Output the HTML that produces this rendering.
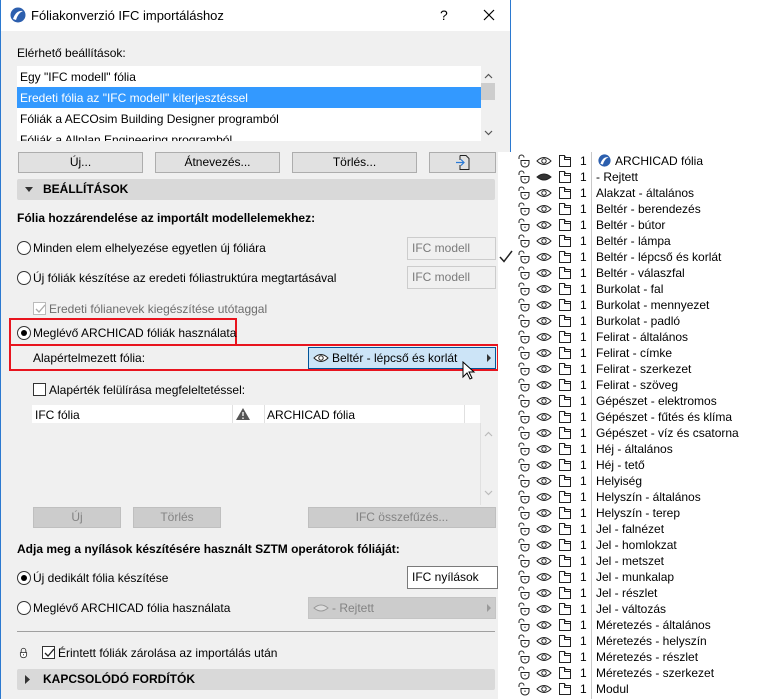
<!DOCTYPE html>
<html><head><meta charset="utf-8">
<style>
*{box-sizing:border-box;margin:0;padding:0}
body{width:767px;height:699px;background:#fff;position:relative;overflow:hidden;font-family:"Liberation Sans",sans-serif;font-size:12px;color:#000}
.a{position:absolute;white-space:nowrap}
#dlg{position:absolute;left:0;top:0;width:511px;height:699px;background:#f0f0f0;border-left:1px solid #2b79d0;border-right:1px solid #2b79d0}
#title{position:absolute;left:0;top:0;width:509px;height:31px;background:#fff}
.btn{position:absolute;height:21px;background:#e1e1e1;border:1px solid #adadad;text-align:center;line-height:19px}
.btn.d{background:#cccccc;border-color:#bfbfbf;color:#838383}
.sec{position:absolute;left:16px;width:478px;height:21px;background:#d9d9d9;font-weight:bold;line-height:21px;padding-left:26px;border-radius:2px}
.rad{position:absolute;width:14px;height:14px;border:1px solid #333;border-radius:50%;background:#fff}
.rad.on::after{content:"";position:absolute;left:3px;top:3px;width:6px;height:6px;border-radius:50%;background:#000}
.tb{position:absolute;height:23px;border:1px solid #ccc;background:#f0f0f0;color:#7a7a7a;line-height:21px;padding-left:4px}
.cb{position:absolute;width:13px;height:13px;border:1px solid #333;background:#fff}
.red{position:absolute;border:2px solid #e8141e}
#pop{position:absolute;left:498px;top:152px;width:269px;height:547px;background:#fff}
#rows{position:absolute;left:11px;top:0;width:258px;height:547px}
.row{position:absolute;left:0;height:16px;width:258px}
.row svg{position:absolute;top:1px}
.row .n{position:absolute;left:71px;top:1px}
.row .t{position:absolute;left:87px;top:1px}
.sep{position:absolute;left:82px;top:0;width:1px;height:547px;background:#c8c8c8}
</style></head><body>
<svg width="0" height="0" style="position:absolute">
<defs>
<symbol id="lk" viewBox="0 0 14 14"><path d="M2 5V3.5a2.5 2.5 0 0 1 5 0" fill="none" stroke="#222" stroke-width="1"/><path d="M4 6.5h8v3a4 3.5 0 0 1-8 0z" fill="#fff" stroke="#222" stroke-width="1"/><path d="M8 8.5v1.5" stroke="#222"/></symbol>
<symbol id="ey" viewBox="0 0 16 14"><path d="M1 7Q8 0 15 7Q8 14 1 7z" fill="#fff" stroke="#222"/><circle cx="8" cy="7" r="2.2" fill="none" stroke="#222"/></symbol>
<symbol id="eh" viewBox="0 0 16 14"><path d="M1 7Q8 1 15 7Q8 13 1 7z" fill="#333" stroke="#222"/></symbol>
<symbol id="ly" viewBox="0 0 14 14"><path d="M1.5 1.5h5l1 2h5v9h-11z" fill="#fff" stroke="#222"/><path d="M6.5 1.5v4h6" fill="none" stroke="#222"/></symbol>
</defs></svg>

<div id="dlg">
<div id="title">
<svg class="a" style="left:9px;top:7px" width="16" height="16" viewBox="0 0 16 16"><circle cx="8" cy="8" r="7.5" fill="#2c5fae"/><path d="M3 12Q6 3 13 4Q8 6 6 13z" fill="#fff"/></svg>
<div class="a" style="left:30px;top:8px;font-size:13px">Fóliakonverzió IFC importáláshoz</div>
<div class="a" style="left:439px;top:7px;font-size:14px">?</div>
<svg class="a" style="left:482px;top:9px" width="12" height="12"><path d="M1 1L11 11M11 1L1 11" stroke="#000" stroke-width="1.2"/></svg>
</div>

<div class="a" style="left:16px;top:46px">Elérhető beállítások:</div>
<div class="a" style="left:16px;top:66px;width:464px;height:75px;background:#fff;overflow:hidden">
 <div class="a" style="left:0;top:0;width:464px;height:21px;padding:4px 3px">Egy "IFC modell" fólia</div>
 <div class="a" style="left:0;top:21px;width:464px;height:21px;padding:4px 3px;background:#3399ff;color:#fff">Eredeti fólia az "IFC modell" kiterjesztéssel</div>
 <div class="a" style="left:0;top:42px;width:464px;height:21px;padding:4px 3px">Fóliák a AECOsim Building Designer programból</div>
 <div class="a" style="left:0;top:63px;width:464px;height:21px;padding:4px 3px">Fóliák a Allplan Engineering programból</div>
</div>
<div class="a" style="left:480px;top:66px;width:14px;height:75px;background:#f0f0f0"></div>
<div class="a" style="left:480px;top:83px;width:14px;height:17px;background:#cdcdcd"></div>
<svg class="a" style="left:483px;top:73px" width="9" height="6"><path d="M1 5l3.5-3.5L8 5" fill="none" stroke="#555" stroke-width="1.2"/></svg>
<svg class="a" style="left:483px;top:130px" width="9" height="6"><path d="M1 1l3.5 3.5L8 1" fill="none" stroke="#555" stroke-width="1.2"/></svg>

<div class="btn" style="left:17px;top:152px;width:125px">Új...</div>
<div class="btn" style="left:154px;top:152px;width:125px">Átnevezés...</div>
<div class="btn" style="left:291px;top:152px;width:125px">Törlés...</div>
<div class="btn" style="left:428px;top:152px;width:67px"><svg width="16" height="17" style="margin-top:1px" viewBox="0 0 16 17"><path d="M5 1.5h6l3 3v11H5V11" fill="none" stroke="#222"/><path d="M5 6V1.5" stroke="#222"/><path d="M1 8.5h8M6 5.5l3 3-3 3" fill="none" stroke="#2a7ad6" stroke-width="1.2"/></svg></div>

<div class="sec" style="top:179px">BEÁLLÍTÁSOK</div>
<svg class="a" style="left:24px;top:187px" width="8" height="6"><path d="M0 0h8L4 5z" fill="#333"/></svg>

<div class="a" style="left:16px;top:211px;font-weight:bold">Fólia hozzárendelése az importált modellelemekhez:</div>
<div class="rad" style="left:16px;top:241px"></div>
<div class="a" style="left:32px;top:241px">Minden elem elhelyezése egyetlen új fóliára</div>
<div class="tb" style="left:406px;top:237px;width:89px">IFC modell</div>
<div class="rad" style="left:16px;top:271px"></div>
<div class="a" style="left:32px;top:271px">Új fóliák készítése az eredeti fóliastruktúra megtartásával</div>
<div class="tb" style="left:406px;top:266px;width:89px">IFC modell</div>
<div class="cb" style="left:32px;top:302px;border-color:#bbb"></div>
<svg class="a" style="left:33px;top:303px" width="12" height="12"><path d="M2 6l3 3 6-7" fill="none" stroke="#aaa" stroke-width="1.3"/></svg>
<div class="a" style="left:48px;top:302px;color:#6d6d6d">Eredeti fólianevek kiegészítése utótaggal</div>

<div class="red" style="left:8px;top:318px;width:228px;height:28px"></div>
<div class="rad on" style="left:16px;top:326px"></div>
<div class="a" style="left:32px;top:326px">Meglévő ARCHICAD fóliák használata</div>
<div class="red" style="left:8px;top:344px;width:490px;height:27px"></div>
<div class="a" style="left:32px;top:351px">Alapértelmezett fólia:</div>
<div class="a" style="left:307px;top:347px;width:188px;height:22px;background:#cce4f7;border:1px solid #005499"></div>
<svg class="a" style="left:312px;top:351px" width="16" height="14"><use href="#ey"/></svg>
<div class="a" style="left:331px;top:351px">Beltér - lépcső és korlát</div>
<svg class="a" style="left:486px;top:354px" width="5" height="8"><path d="M0 0l4 4-4 4z" fill="#333"/></svg>
<svg class="a" style="left:461px;top:361px" width="14" height="20"><path d="M1 1v15l4-4 3 6 2-1-3-6h5z" fill="#fff" stroke="#000"/></svg>

<div class="cb" style="left:32px;top:383px"></div>
<div class="a" style="left:48px;top:383px">Alapérték felülírása megfeleltetéssel:</div>
<div class="a" style="left:31px;top:405px;width:448px;height:18px;background:#fff"></div>
<div class="a" style="left:231px;top:405px;width:1px;height:18px;background:#e0e0e0"></div>
<div class="a" style="left:263px;top:405px;width:1px;height:18px;background:#e0e0e0"></div>
<div class="a" style="left:463px;top:405px;width:1px;height:18px;background:#e0e0e0"></div>
<div class="a" style="left:34px;top:408px">IFC fólia</div>
<svg class="a" style="left:234px;top:407px" width="16" height="14"><path d="M8 1L15 13H1z" fill="#555"/><path d="M8 5v4M8 10.5v1.5" stroke="#fff" stroke-width="1.3"/></svg>
<div class="a" style="left:266px;top:408px">ARCHICAD fólia</div>
<div class="a" style="left:479px;top:423px;width:15px;height:82px;background:#f0f0f0;border-left:1px solid #e0e0e0"></div>
<svg class="a" style="left:483px;top:431px" width="9" height="6"><path d="M1 5l3.5-3.5L8 5" fill="none" stroke="#bbb" stroke-width="1.2"/></svg>
<svg class="a" style="left:483px;top:490px" width="9" height="6"><path d="M1 1l3.5 3.5L8 1" fill="none" stroke="#bbb" stroke-width="1.2"/></svg>

<div class="btn d" style="left:32px;top:507px;width:88px">Új</div>
<div class="btn d" style="left:132px;top:507px;width:88px">Törlés</div>
<div class="btn d" style="left:307px;top:507px;width:188px">IFC összefűzés...</div>

<div class="a" style="left:16px;top:542px;font-weight:bold">Adja meg a nyílások készítésére használt SZTM operátorok fóliáját:</div>
<div class="rad on" style="left:16px;top:571px"></div>
<div class="a" style="left:32px;top:571px">Új dedikált fólia készítése</div>
<div class="tb" style="left:406px;top:566px;width:91px;background:#fff;color:#000;border-color:#7a7a7a">IFC nyílások</div>
<div class="rad" style="left:16px;top:601px"></div>
<div class="a" style="left:32px;top:601px">Meglévő ARCHICAD fólia használata</div>
<div class="a" style="left:307px;top:597px;width:188px;height:22px;background:#cccccc;border:1px solid #c4c4c4"></div>
<svg class="a" style="left:312px;top:601px" width="16" height="14"><path d="M1 7Q8 1 15 7Q8 13 1 7z" fill="#ddd" stroke="#999"/></svg>
<div class="a" style="left:331px;top:601px;color:#838383">- Rejtett</div>
<svg class="a" style="left:486px;top:604px" width="5" height="8"><path d="M0 0l4 4-4 4z" fill="#999"/></svg>
<div class="a" style="left:16px;top:631px;width:478px;height:1px;background:#a0a0a0"></div>
<svg class="a" style="left:17px;top:646px" width="11" height="14" viewBox="0 0 14 14"><path d="M4 6V4a3 3 0 0 1 6 0v2" fill="none" stroke="#222"/><path d="M3 6.5h8v3a4 3.5 0 0 1-8 0z" fill="#fff" stroke="#222"/><path d="M7 8.5v1.5" stroke="#222"/></svg>
<div class="cb" style="left:41px;top:646px"></div>
<svg class="a" style="left:42px;top:647px" width="12" height="12"><path d="M2 6l3 3 6-7" fill="none" stroke="#222" stroke-width="1.3"/></svg>
<div class="a" style="left:57px;top:646px">Érintett fóliák zárolása az importálás után</div>
<div class="sec" style="top:669px">KAPCSOLÓDÓ FORDÍTÓK</div>
<svg class="a" style="left:24px;top:675px" width="6" height="9"><path d="M0 0l5 4.5L0 9z" fill="#333"/></svg>
</div>

<div id="pop"><div id="rows">
<div class="sep"></div>
<div class="row" style="top:1px"><svg style="left:8px" width="14" height="14"><use href="#lk"/></svg><svg style="left:27px" width="16" height="14"><use href="#ey"/></svg><svg style="left:49px" width="14" height="14"><use href="#ly"/></svg><span class="n">1</span><svg style="left:89px" width="13" height="13" viewBox="0 0 16 16"><circle cx="8" cy="8" r="7.5" fill="#2c5fae"/><path d="M3 12Q6 3 13 4Q8 6 6 13z" fill="#fff"/></svg><span class="t" style="left:106px">ARCHICAD fólia</span></div>
<div class="row" style="top:17px"><svg style="left:8px" width="14" height="14"><use href="#lk"/></svg><svg style="left:27px" width="16" height="14"><use href="#eh"/></svg><svg style="left:49px" width="14" height="14"><use href="#ly"/></svg><span class="n">1</span><span class="t">- Rejtett</span></div>
<div class="row" style="top:33px"><svg style="left:8px" width="14" height="14"><use href="#lk"/></svg><svg style="left:27px" width="16" height="14"><use href="#ey"/></svg><svg style="left:49px" width="14" height="14"><use href="#ly"/></svg><span class="n">1</span><span class="t">Alakzat - általános</span></div>
<div class="row" style="top:49px"><svg style="left:8px" width="14" height="14"><use href="#lk"/></svg><svg style="left:27px" width="16" height="14"><use href="#ey"/></svg><svg style="left:49px" width="14" height="14"><use href="#ly"/></svg><span class="n">1</span><span class="t">Beltér - berendezés</span></div>
<div class="row" style="top:65px"><svg style="left:8px" width="14" height="14"><use href="#lk"/></svg><svg style="left:27px" width="16" height="14"><use href="#ey"/></svg><svg style="left:49px" width="14" height="14"><use href="#ly"/></svg><span class="n">1</span><span class="t">Beltér - bútor</span></div>
<div class="row" style="top:81px"><svg style="left:8px" width="14" height="14"><use href="#lk"/></svg><svg style="left:27px" width="16" height="14"><use href="#ey"/></svg><svg style="left:49px" width="14" height="14"><use href="#ly"/></svg><span class="n">1</span><span class="t">Beltér - lámpa</span></div>
<div class="row" style="top:97px"><svg style="left:-10px" width="14" height="13"><path d="M1 7l4 4.5L13 1" fill="none" stroke="#222" stroke-width="1.5"/></svg><svg style="left:8px" width="14" height="14"><use href="#lk"/></svg><svg style="left:27px" width="16" height="14"><use href="#ey"/></svg><svg style="left:49px" width="14" height="14"><use href="#ly"/></svg><span class="n">1</span><span class="t">Beltér - lépcső és korlát</span></div>
<div class="row" style="top:113px"><svg style="left:8px" width="14" height="14"><use href="#lk"/></svg><svg style="left:27px" width="16" height="14"><use href="#ey"/></svg><svg style="left:49px" width="14" height="14"><use href="#ly"/></svg><span class="n">1</span><span class="t">Beltér - válaszfal</span></div>
<div class="row" style="top:129px"><svg style="left:8px" width="14" height="14"><use href="#lk"/></svg><svg style="left:27px" width="16" height="14"><use href="#ey"/></svg><svg style="left:49px" width="14" height="14"><use href="#ly"/></svg><span class="n">1</span><span class="t">Burkolat - fal</span></div>
<div class="row" style="top:145px"><svg style="left:8px" width="14" height="14"><use href="#lk"/></svg><svg style="left:27px" width="16" height="14"><use href="#ey"/></svg><svg style="left:49px" width="14" height="14"><use href="#ly"/></svg><span class="n">1</span><span class="t">Burkolat - mennyezet</span></div>
<div class="row" style="top:161px"><svg style="left:8px" width="14" height="14"><use href="#lk"/></svg><svg style="left:27px" width="16" height="14"><use href="#ey"/></svg><svg style="left:49px" width="14" height="14"><use href="#ly"/></svg><span class="n">1</span><span class="t">Burkolat - padló</span></div>
<div class="row" style="top:177px"><svg style="left:8px" width="14" height="14"><use href="#lk"/></svg><svg style="left:27px" width="16" height="14"><use href="#ey"/></svg><svg style="left:49px" width="14" height="14"><use href="#ly"/></svg><span class="n">1</span><span class="t">Felirat - általános</span></div>
<div class="row" style="top:193px"><svg style="left:8px" width="14" height="14"><use href="#lk"/></svg><svg style="left:27px" width="16" height="14"><use href="#ey"/></svg><svg style="left:49px" width="14" height="14"><use href="#ly"/></svg><span class="n">1</span><span class="t">Felirat - címke</span></div>
<div class="row" style="top:209px"><svg style="left:8px" width="14" height="14"><use href="#lk"/></svg><svg style="left:27px" width="16" height="14"><use href="#ey"/></svg><svg style="left:49px" width="14" height="14"><use href="#ly"/></svg><span class="n">1</span><span class="t">Felirat - szerkezet</span></div>
<div class="row" style="top:225px"><svg style="left:8px" width="14" height="14"><use href="#lk"/></svg><svg style="left:27px" width="16" height="14"><use href="#ey"/></svg><svg style="left:49px" width="14" height="14"><use href="#ly"/></svg><span class="n">1</span><span class="t">Felirat - szöveg</span></div>
<div class="row" style="top:241px"><svg style="left:8px" width="14" height="14"><use href="#lk"/></svg><svg style="left:27px" width="16" height="14"><use href="#ey"/></svg><svg style="left:49px" width="14" height="14"><use href="#ly"/></svg><span class="n">1</span><span class="t">Gépészet - elektromos</span></div>
<div class="row" style="top:257px"><svg style="left:8px" width="14" height="14"><use href="#lk"/></svg><svg style="left:27px" width="16" height="14"><use href="#ey"/></svg><svg style="left:49px" width="14" height="14"><use href="#ly"/></svg><span class="n">1</span><span class="t">Gépészet - fűtés és klíma</span></div>
<div class="row" style="top:273px"><svg style="left:8px" width="14" height="14"><use href="#lk"/></svg><svg style="left:27px" width="16" height="14"><use href="#ey"/></svg><svg style="left:49px" width="14" height="14"><use href="#ly"/></svg><span class="n">1</span><span class="t">Gépészet - víz és csatorna</span></div>
<div class="row" style="top:289px"><svg style="left:8px" width="14" height="14"><use href="#lk"/></svg><svg style="left:27px" width="16" height="14"><use href="#ey"/></svg><svg style="left:49px" width="14" height="14"><use href="#ly"/></svg><span class="n">1</span><span class="t">Héj - általános</span></div>
<div class="row" style="top:305px"><svg style="left:8px" width="14" height="14"><use href="#lk"/></svg><svg style="left:27px" width="16" height="14"><use href="#ey"/></svg><svg style="left:49px" width="14" height="14"><use href="#ly"/></svg><span class="n">1</span><span class="t">Héj - tető</span></div>
<div class="row" style="top:321px"><svg style="left:8px" width="14" height="14"><use href="#lk"/></svg><svg style="left:27px" width="16" height="14"><use href="#ey"/></svg><svg style="left:49px" width="14" height="14"><use href="#ly"/></svg><span class="n">1</span><span class="t">Helyiség</span></div>
<div class="row" style="top:337px"><svg style="left:8px" width="14" height="14"><use href="#lk"/></svg><svg style="left:27px" width="16" height="14"><use href="#ey"/></svg><svg style="left:49px" width="14" height="14"><use href="#ly"/></svg><span class="n">1</span><span class="t">Helyszín - általános</span></div>
<div class="row" style="top:353px"><svg style="left:8px" width="14" height="14"><use href="#lk"/></svg><svg style="left:27px" width="16" height="14"><use href="#ey"/></svg><svg style="left:49px" width="14" height="14"><use href="#ly"/></svg><span class="n">1</span><span class="t">Helyszín - terep</span></div>
<div class="row" style="top:369px"><svg style="left:8px" width="14" height="14"><use href="#lk"/></svg><svg style="left:27px" width="16" height="14"><use href="#ey"/></svg><svg style="left:49px" width="14" height="14"><use href="#ly"/></svg><span class="n">1</span><span class="t">Jel - falnézet</span></div>
<div class="row" style="top:385px"><svg style="left:8px" width="14" height="14"><use href="#lk"/></svg><svg style="left:27px" width="16" height="14"><use href="#ey"/></svg><svg style="left:49px" width="14" height="14"><use href="#ly"/></svg><span class="n">1</span><span class="t">Jel - homlokzat</span></div>
<div class="row" style="top:401px"><svg style="left:8px" width="14" height="14"><use href="#lk"/></svg><svg style="left:27px" width="16" height="14"><use href="#ey"/></svg><svg style="left:49px" width="14" height="14"><use href="#ly"/></svg><span class="n">1</span><span class="t">Jel - metszet</span></div>
<div class="row" style="top:417px"><svg style="left:8px" width="14" height="14"><use href="#lk"/></svg><svg style="left:27px" width="16" height="14"><use href="#ey"/></svg><svg style="left:49px" width="14" height="14"><use href="#ly"/></svg><span class="n">1</span><span class="t">Jel - munkalap</span></div>
<div class="row" style="top:433px"><svg style="left:8px" width="14" height="14"><use href="#lk"/></svg><svg style="left:27px" width="16" height="14"><use href="#ey"/></svg><svg style="left:49px" width="14" height="14"><use href="#ly"/></svg><span class="n">1</span><span class="t">Jel - részlet</span></div>
<div class="row" style="top:449px"><svg style="left:8px" width="14" height="14"><use href="#lk"/></svg><svg style="left:27px" width="16" height="14"><use href="#ey"/></svg><svg style="left:49px" width="14" height="14"><use href="#ly"/></svg><span class="n">1</span><span class="t">Jel - változás</span></div>
<div class="row" style="top:465px"><svg style="left:8px" width="14" height="14"><use href="#lk"/></svg><svg style="left:27px" width="16" height="14"><use href="#ey"/></svg><svg style="left:49px" width="14" height="14"><use href="#ly"/></svg><span class="n">1</span><span class="t">Méretezés - általános</span></div>
<div class="row" style="top:481px"><svg style="left:8px" width="14" height="14"><use href="#lk"/></svg><svg style="left:27px" width="16" height="14"><use href="#ey"/></svg><svg style="left:49px" width="14" height="14"><use href="#ly"/></svg><span class="n">1</span><span class="t">Méretezés - helyszín</span></div>
<div class="row" style="top:497px"><svg style="left:8px" width="14" height="14"><use href="#lk"/></svg><svg style="left:27px" width="16" height="14"><use href="#ey"/></svg><svg style="left:49px" width="14" height="14"><use href="#ly"/></svg><span class="n">1</span><span class="t">Méretezés - részlet</span></div>
<div class="row" style="top:513px"><svg style="left:8px" width="14" height="14"><use href="#lk"/></svg><svg style="left:27px" width="16" height="14"><use href="#ey"/></svg><svg style="left:49px" width="14" height="14"><use href="#ly"/></svg><span class="n">1</span><span class="t">Méretezés - szerkezet</span></div>
<div class="row" style="top:529px"><svg style="left:8px" width="14" height="14"><use href="#lk"/></svg><svg style="left:27px" width="16" height="14"><use href="#ey"/></svg><svg style="left:49px" width="14" height="14"><use href="#ly"/></svg><span class="n">1</span><span class="t">Modul</span></div>
</div></div>
</body></html>
